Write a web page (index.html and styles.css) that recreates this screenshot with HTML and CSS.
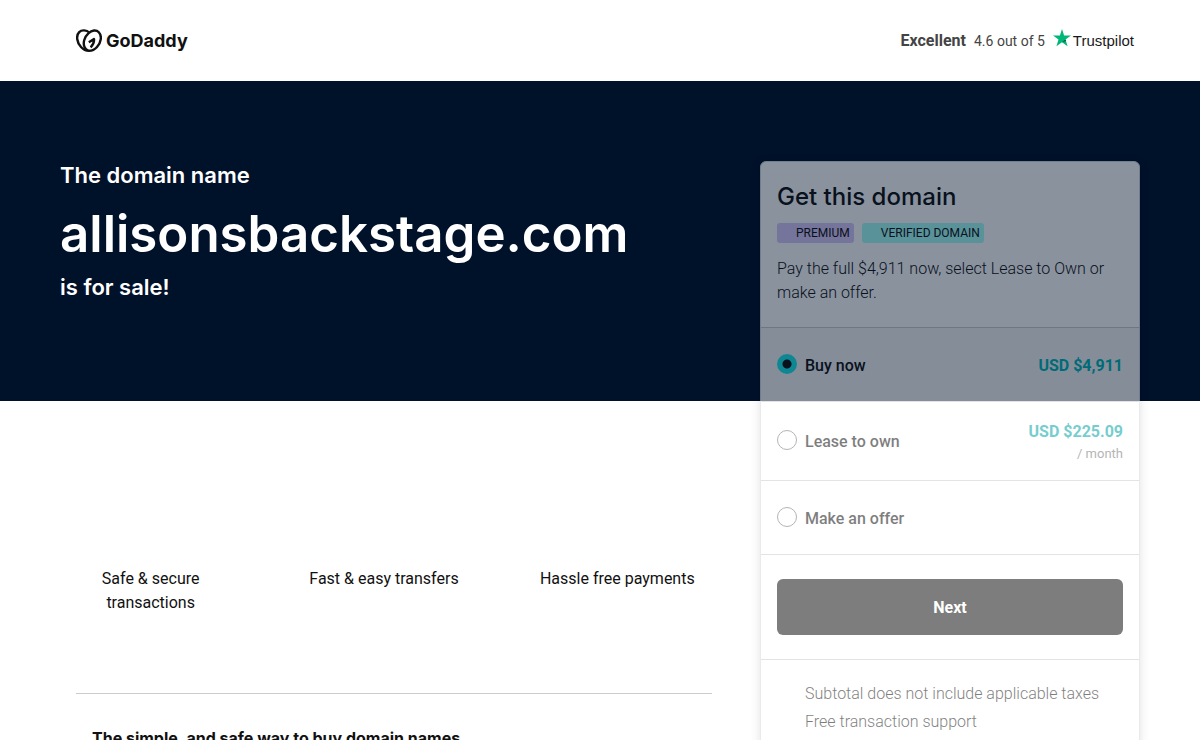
FILE: index.html
```html
<!DOCTYPE html>
<html lang="en">
<head>
<meta charset="utf-8">
<meta name="viewport" content="width=device-width, initial-scale=1">
<title>allisonsbackstage.com is for sale</title>
<link rel="stylesheet" href="styles.css">
</head>
<body>
<header class="topbar">
  <a class="brand" href="#" aria-label="GoDaddy">
    <svg class="brand-mark" viewBox="0 0 26 24" aria-hidden="true">
      <path d="M13.500 3.800C10.500.9 5.800.5 3.200 3.200-.2 6.800.8 13.400 5 18c2.100 2.400 4.900 3.800 8 3.800s5.900-1.400 8-3.800c4.200-4.600 5.200-11.200 1.800-14.800-2.500-2.600-7-2.100-10.200.9C8.200 8 6.500 14.500 8.800 18.500c.7 1.400 2 2.400 3.600 3M12.800 13.200l5.200-3.100c.3 3-1 6-3.400 8.200"/>
    </svg>
    <span class="brand-name">GoDaddy</span>
  </a>
  <div class="rating">
    <strong class="rating-word">Excellent</strong>
    <span class="rating-score">4.6 out of 5</span>
    <a class="trustpilot" href="#">
      <svg class="star" viewBox="0 0 18 18" aria-hidden="true">
        <path fill="#00b67a" d="M9 0l2.100 6.500H18l-5.500 4.100 2.100 6.600L9 13.200l-5.600 4 2.100-6.600L0 6.500h6.900z"/>
        <path fill="#005128" d="M13 12.100l-.5-1.500L9 13.200z"/>
      </svg>
      <span>Trustpilot</span>
    </a>
  </div>
</header>
<main class="page">
  <div class="layout">
    <section class="hero">
      <p class="hero-line">The domain name</p>
      <h1 class="hero-domain">allisonsbackstage.com</h1>
      <p class="hero-line">is for sale!</p>
    </section>
    <form class="card">
      <div class="card-intro">
        <h2 class="card-title">Get this domain</h2>
        <div class="tags">
          <span class="tag tag-premium">PREMIUM</span>
          <span class="tag tag-verified">VERIFIED DOMAIN</span>
        </div>
        <p class="card-text">Pay the full $4,911 now, select Lease to Own or make an offer.</p>
      </div>
      <label class="option option-selected">
        <input class="radio" type="radio" name="plan" checked>
        <span class="option-name">Buy now</span>
        <span class="price">USD $4,911</span>
      </label>
      <label class="option">
        <input class="radio" type="radio" name="plan">
        <span class="option-name">Lease to own</span>
        <span class="price">USD $225.09<small class="period">/ month</small></span>
      </label>
      <label class="option">
        <input class="radio" type="radio" name="plan">
        <span class="option-name">Make an offer</span>
      </label>
      <div class="action">
        <button class="next" type="submit">Next</button>
      </div>
      <ul class="notes">
        <li>Subtotal does not include applicable taxes</li>
        <li>Free transaction support</li>
      </ul>
    </form>
    <section class="details">
      <ul class="features">
        <li>Safe &amp; secure transactions</li>
        <li>Fast &amp; easy transfers</li>
        <li>Hassle free payments</li>
      </ul>
      <h2 class="details-title">The simple, and safe way to buy domain names</h2>
    </section>
  </div>
</main>
</body>
</html>
```
FILE: styles.css
```css
* {
  box-sizing: border-box;
}

body {
  margin: 0;
  height: 100vh;
  overflow: hidden;
  background: #fff;
  color: #111;
  font: 16px/24px Roboto, "Liberation Sans", sans-serif;
}

h1, h2, p, ul {
  margin: 0;
  padding: 0;
}

ul {
  list-style: none;
}

a {
  color: inherit;
  text-decoration: none;
}

.topbar {
  display: flex;
  align-items: center;
  justify-content: space-between;
  max-width: 1080px;
  height: 81px;
  margin: 0 auto;
  padding: 0 6px 0 16px;
}

.brand {
  display: flex;
  align-items: center;
  gap: 4px;
}

.brand-mark {
  width: 26px;
  height: 24px;
  fill: none;
  stroke: #111;
  stroke-width: 2.4;
  stroke-linejoin: round;
}

.brand-name {
  font: 700 18px/24px Inter, sans-serif;
}

.rating {
  display: flex;
  align-items: center;
  gap: 8px;
  color: #444;
}

.rating-word {
  font-weight: 700;
}

.rating-score {
  font-size: 14px;
}

.trustpilot {
  display: flex;
  align-items: center;
  gap: 2px;
  color: #191919;
  font: 15px/24px "Liberation Sans", sans-serif;
}

.star {
  width: 18px;
  height: 18px;
  margin-bottom: 6px;
}

.page {
  background: linear-gradient(#00112a 320px, #fff 320px);
}

.layout {
  display: grid;
  grid-template-columns: minmax(0, 1fr) 380px;
  grid-template-rows: 320px auto;
  column-gap: 48px;
  max-width: 1080px;
  margin: 0 auto;
}

.hero {
  padding-top: 78px;
  color: #fff;
}

.hero-line {
  font: 600 22px/32px Inter, sans-serif;
}

.hero-domain {
  padding-top: 6px;
  font: 600 51px/74px Inter, sans-serif;
}

.card {
  grid-column: 2;
  grid-row: 1 / 3;
  margin-top: 80px;
  border: 1px solid #d4dbe0;
  border-radius: 6px;
  background: #fff;
  box-shadow: 0 2px 10px rgba(0, 0, 0, 0.2);
  opacity: 0.54;
  overflow: hidden;
}

.card-intro {
  padding: 16px 16px 22px;
}

.card-title {
  font: 500 24px/38px Inter, sans-serif;
}

.tags {
  display: flex;
  gap: 8px;
  margin: 7px 0 14px;
}

.tag {
  padding: 1px 4px 0 19px;
  border-radius: 3px;
  font-size: 12px;
  line-height: 19px;
}

.tag-premium {
  background: #d9c8fa;
}

.tag-verified {
  background: #a6fff8;
}

.card-text {
  font-weight: 300;
}

.option {
  display: grid;
  grid-template-columns: 20px 1fr auto;
  column-gap: 8px;
  align-items: center;
  min-height: 74px;
  padding: 18px 16px 16px;
  border-top: 1px solid #ccc;
  font-weight: 500;
}

.option-selected {
  background: #f5f7f8;
}

.radio {
  appearance: none;
  width: 20px;
  height: 20px;
  margin: 0 0 4px;
  border: 1px solid #767676;
  border-radius: 50%;
  background: #fff;
}

.radio:checked {
  border: 0;
  background: radial-gradient(circle, #111 4px, #1bebeb 5px);
}

.price {
  color: #00a4a6;
  font-weight: 700;
  text-align: right;
}

.option-selected .price {
  color: #00b8ba;
}

.period {
  display: block;
  color: #767676;
  font-size: 13px;
  font-weight: 400;
  line-height: 20px;
}

.action {
  padding: 24px 16px;
  border-top: 1px solid #ccc;
}

.next {
  display: block;
  width: 100%;
  height: 56px;
  padding: 2px 0 0;
  border: 0;
  border-radius: 6px;
  background: #111;
  color: #fff;
  font: 700 16px/24px Roboto, sans-serif;
}

.notes {
  padding: 20px 16px 40px 44px;
  border-top: 1px solid #ccc;
  font-weight: 300;
  line-height: 28px;
}

.details {
  padding: 166px 0 0 16px;
}

.features {
  display: grid;
  grid-template-columns: repeat(3, 1fr);
  gap: 76px;
  min-height: 126px;
  margin: 0 16px 0 -4px;
  text-align: center;
}

.details-title {
  padding: 32px 16px;
  border-top: 1px solid #ccc;
  font: 700 16px/24px Inter, sans-serif;
}
```
